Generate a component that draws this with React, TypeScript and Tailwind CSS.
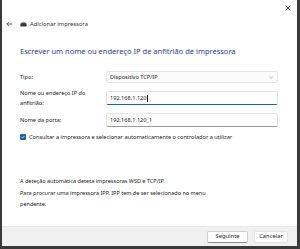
export default function App() {
  return (
    <div className="w-[300px] h-[249px] bg-[#3a3a3a] pl-[2px] pr-[3px] pb-[3px] font-['Noto_Sans',sans-serif]">
      <div className="w-full h-full bg-white flex flex-col">
        {/* title bar */}
        <div className="h-[16px] flex justify-end pr-[6px] pt-[5px]">
          <svg width="6" height="6" viewBox="0 0 6 6" className="text-[#555]">
            <path d="M0.5 0.5 L5.5 5.5 M5.5 0.5 L0.5 5.5" stroke="currentColor" strokeWidth="0.9" />
          </svg>
        </div>

        {/* nav */}
        <div className="mt-[2px] h-[12px] flex items-center pl-[4px] text-[5.8px] text-[#333]">
          <svg width="7" height="6" viewBox="0 0 7 6" className="text-[#444]">
            <path d="M6.5 3 H0.8 M3 0.8 L0.8 3 L3 5.2" stroke="currentColor" strokeWidth="0.8" fill="none" />
          </svg>
          <svg width="7" height="5" viewBox="0 0 7 5" className="ml-[7px] text-[#3a3a3a]">
            <path d="M1.5 0.5 H5.5 V1.5 H6.6 V4.5 H0.4 V1.5 H1.5 Z" fill="currentColor" />
          </svg>
          <span className="ml-[3px]">Adicionar impressora</span>
        </div>

        {/* heading */}
        <div className="mt-[15px] pl-[18px] h-[12px] leading-[12px] text-[7.5px] text-[#1d3f8f]">
          Escrever um nome ou endereço IP de anfitrião de impressora
        </div>

        {/* form */}
        <div className="mt-[14px] pl-[18px] pr-[19px] flex flex-col text-[5.6px] text-[#222]">
          <div className="h-[12px] flex items-center">
            <span className="w-[86px] shrink-0">Tipo:</span>
            <div className="flex-1 h-[12px] bg-[#fbfbfb] border border-[#e6e6e6] rounded-[2px] flex items-center justify-between pl-[3px] pr-[4px]">
              <span>Dispositivo TCP/IP</span>
              <svg width="4" height="3" viewBox="0 0 4 3" className="text-[#888]">
                <path d="M0.4 0.8 L2 2.3 L3.6 0.8" stroke="currentColor" strokeWidth="0.6" fill="none" />
              </svg>
            </div>
          </div>

          <div className="mt-[5px] h-[19px] flex items-start">
            <span className="w-[86px] shrink-0 leading-[10px]">
              Nome ou endereço IP do
              <br />
              anfitrião:
            </span>
            <div className="flex-1 mt-[3px] h-[14px] bg-white border border-[#e3e3e3] border-b-[#1f5fa8] border-b-[1.5px] rounded-[2px] flex items-center pl-[3px]">
              <span>192.168.1.120</span>
              <span className="w-[0.7px] h-[7px] bg-[#111] ml-[0.5px]" />
            </div>
          </div>

          <div className="mt-[6px] h-[14px] flex items-center">
            <span className="w-[86px] shrink-0">Nome da porta:</span>
            <div className="flex-1 h-[14px] bg-white border border-[#e3e3e3] border-b-[#9a9a9a] rounded-[2px] flex items-center pl-[3px]">
              192.168.1.120_1
            </div>
          </div>

          <div className="mt-[5px] h-[10px] flex items-center">
            <div className="w-[6px] h-[6px] rounded-[1px] bg-[#1764b8] flex items-center justify-center">
              <svg width="4" height="4" viewBox="0 0 4 4">
                <path d="M0.6 2 L1.6 3 L3.4 1" stroke="white" strokeWidth="0.7" fill="none" />
              </svg>
            </div>
            <span className="ml-[3px]">Consultar a impressora e selecionar automaticamente o controlador a utilizar</span>
          </div>
        </div>

        {/* info */}
        <div className="mt-[34px] pl-[18px] text-[5.5px] leading-[11.5px] text-[#222]">
          A deteção automática deteta impressoras WSD e TCP/IP.
          <br />
          Para procurar uma impressora IPP, IPP tem de ser selecionado no menu
          <br />
          pendente.
        </div>

        {/* footer */}
        <div className="mt-auto h-[20px] bg-[#f0f0f0] border-t border-[#e8e8e8] flex items-center justify-end gap-[6px] pr-[9px] text-[5.8px] text-[#222]">
          <div className="w-[41px] h-[12px] bg-[#fdfdfd] border border-[#cfcfcf] border-b-[#8a8a8a] rounded-[2px] flex items-center justify-center">
            Seguinte
          </div>
          <div className="w-[34px] h-[12px] bg-[#fdfdfd] border border-[#e3e3e3] rounded-[2px] flex items-center justify-center">
            Cancelar
          </div>
        </div>
      </div>
    </div>
  );
}
